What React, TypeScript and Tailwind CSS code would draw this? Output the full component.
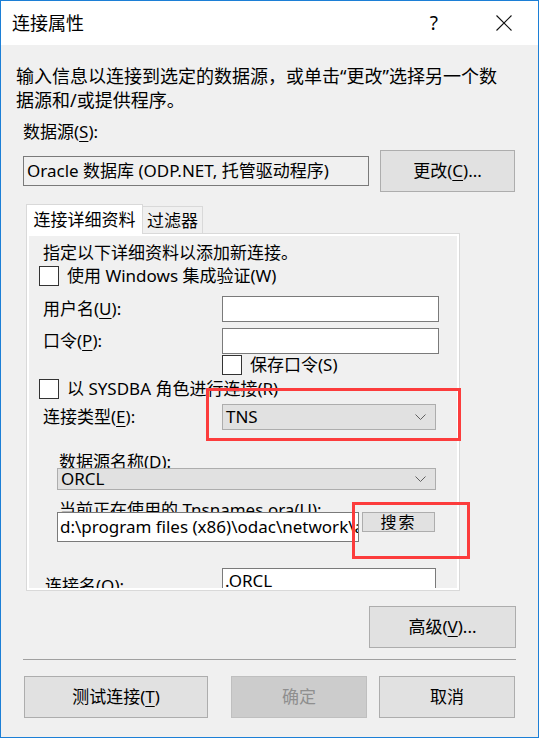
import { ReactNode } from "react";

function Key({ children }: { children: ReactNode }) {
  return <span className="underline underline-offset-[3px] decoration-1">{children}</span>;
}

function Box() {
  return <div className="w-[20px] h-[20px] shrink-0 border border-[#333333] bg-white" />;
}

function Chevron() {
  return (
    <svg width="11" height="6" viewBox="0 0 11 6" className="shrink-0">
      <polyline points="0.5,0.5 5.5,5.5 10.5,0.5" fill="none" stroke="#606060" strokeWidth="1" />
    </svg>
  );
}

function Button({ children, className = "", disabled = false }: { children: ReactNode; className?: string; disabled?: boolean }) {
  return (
    <div
      className={
        "flex items-center justify-center h-[42px] border text-[17px] " +
        (disabled ? "bg-[#cccccc] border-[#bfbfbf] text-[#8f8f8f] " : "bg-[#e1e1e1] border-[#adadad] text-black ") +
        className
      }
    >
      {children}
    </div>
  );
}

export default function App() {
  return (
    <div className="relative w-[539px] h-[738px] border border-[#1c7fd6] bg-[#f0f0f0] flex flex-col font-['Noto_Sans','Noto_Sans_CJK_SC',sans-serif] text-black overflow-hidden">
      {/* title bar */}
      <div className="h-[44px] shrink-0 bg-white flex items-center pl-[11px]">
        <span className="text-[18px] leading-[24px]">连接属性</span>
        <span className="ml-auto mr-[58px] text-[19px] leading-[24px]">?</span>
        <svg width="16" height="16" viewBox="0 0 16 16" className="mr-[26px]">
          <path d="M0.5 0.5 L15.5 15.5 M15.5 0.5 L0.5 15.5" stroke="#111" strokeWidth="1.1" />
        </svg>
      </div>

      <p className="mt-[19px] pl-[15px] pr-[34px] text-[18px] leading-[24px]">
        输入信息以连接到选定的数据源，或单击“更改”选择另一个数据源和/或提供程序。
      </p>

      <div className="mt-[8px] pl-[22px] text-[17px] leading-[24px]">
        数据源(<Key>S</Key>):
      </div>

      <div className="mt-[6px] flex items-center">
        <div className="ml-[22px] w-[346px] h-[30px] border border-[#7a7a7a] bg-[#f0f0f0] flex items-center pl-[3px] text-[17px] whitespace-nowrap overflow-hidden">
          Oracle 数据库 (ODP.NET, 托管驱动程序)
        </div>
        <Button className="ml-[11px] w-[135px]">
          更改(<Key>C</Key>)...
        </Button>
      </div>

      {/* tabs */}
      <div className="mt-[12px] flex items-end h-[29px] pl-[25px]">
        <div className="relative z-10 w-[117px] h-[30px] -mb-px bg-white border border-b-0 border-[#d9d9d9] flex items-center justify-center text-[17px]">
          连接详细资料
        </div>
        <div className="w-[60px] h-[28px] -mb-px bg-[#f0f0f0] border border-l-0 border-b-0 border-[#d9d9d9] flex items-center justify-center text-[17px]">
          过滤器
        </div>
      </div>

      <div className="ml-[25px] w-[434px] h-[358px] border border-[#d9d9d9] bg-white p-[2px]">
        <div className="h-full bg-[#f0f0f0] overflow-hidden flex flex-col text-[17px] leading-[20px]">
          <div className="mt-[7px] pl-[14px] h-[20px]">指定以下详细资料以添加新连接。</div>

          <div className="mt-[3px] h-[20px] pl-[10px] flex items-center gap-[8px]">
            <Box />
            <span>使用 Windows 集成验证(W)</span>
          </div>

          <div className="mt-[10px] h-[26px] flex items-center">
            <div className="w-[193px] pl-[14px]">
              用户名(<Key>U</Key>):
            </div>
            <div className="relative w-[217px] h-[26px] border border-[#7a7a7a] bg-white" />
          </div>

          <div className="mt-[6px] h-[26px] flex items-center">
            <div className="w-[193px] pl-[14px]">
              口令(<Key>P</Key>):
            </div>
            <div className="relative w-[217px] h-[26px] border border-[#7a7a7a] bg-white" />
          </div>

          <div className="mt-[1px] h-[20px] pl-[193px] flex items-center gap-[8px]">
            <Box />
            <span>保存口令(S)</span>
          </div>

          <div className="mt-[4px] h-[20px] pl-[10px] flex items-center gap-[8px]">
            <Box />
            <span>以 SYSDBA 角色进行连接(R)</span>
          </div>

          <div className="mt-[5px] h-[26px] flex items-center">
            <div className="w-[193px] pl-[14px]">
              连接类型(<Key>E</Key>):
            </div>
            <div className="relative w-[214px] h-[26px] border border-[#adadad] bg-[#e1e1e1] flex items-center justify-between pl-[3px] pr-[9px]">
              <span>TNS</span>
              <Chevron />
            </div>
          </div>

          <div className="mt-[22px] h-[16px] pl-[30px]">数据源名称(D):</div>
          <div className="relative ml-[28px] w-[379px] h-[27px] border border-[#adadad] bg-[#e1e1e1] flex items-center justify-between pl-[3px] pr-[9px]">
            <span>ORCL</span>
            <Chevron />
          </div>

          <div className="mt-[10px] h-[12px] pl-[30px] whitespace-nowrap">当前正在使用的 Tnsnames.ora(U):</div>
          <div className="flex items-start">
            <div className="relative ml-[28px] w-[302px] h-[30px] border border-[#7a7a7a] bg-white flex items-center pl-[2px] whitespace-nowrap overflow-hidden">
              d:\program files (x86)\odac\network\admin
            </div>
            <div className="relative ml-[3px] w-[73px] h-[20px] border border-[#adadad] bg-[#e1e1e1] flex items-center justify-center text-[16px] tracking-[2px]">
              搜索
            </div>
          </div>

          <div className="mt-[26px] flex items-start shrink-0">
            <div className="mt-[8px] w-[193px] pl-[16px] shrink-0">
              连接名(O):
            </div>
            <div className="relative w-[214px] h-[26px] shrink-0 border border-[#7a7a7a] bg-white flex items-center pl-[2px]">
              .ORCL
            </div>
          </div>
        </div>
      </div>

      <div className="mt-[15px] flex justify-end pr-[22px]">
        <Button className="w-[147px]">
          高级(<Key>V</Key>)...
        </Button>
      </div>

      <div className="mt-[11px] ml-[22px] w-[493px] h-px bg-[#a0a0a0]" />

      <div className="mt-[16px] flex items-center">
        <Button className="ml-[23px] w-[184px]">
          测试连接(<Key>T</Key>)
        </Button>
        <Button disabled className="ml-[23px] w-[136px]">
          确定
        </Button>
        <Button className="ml-[12px] w-[136px]">取消</Button>
      </div>

      {/* annotation boxes */}
      <div className="absolute left-[205px] top-[387px] w-[255px] h-[53px] border-[3px] border-[#fc3c3c]" />
      <div className="absolute left-[351px] top-[501px] w-[118px] h-[57px] border-[3px] border-[#fc3c3c]" />
    </div>
  );
}
